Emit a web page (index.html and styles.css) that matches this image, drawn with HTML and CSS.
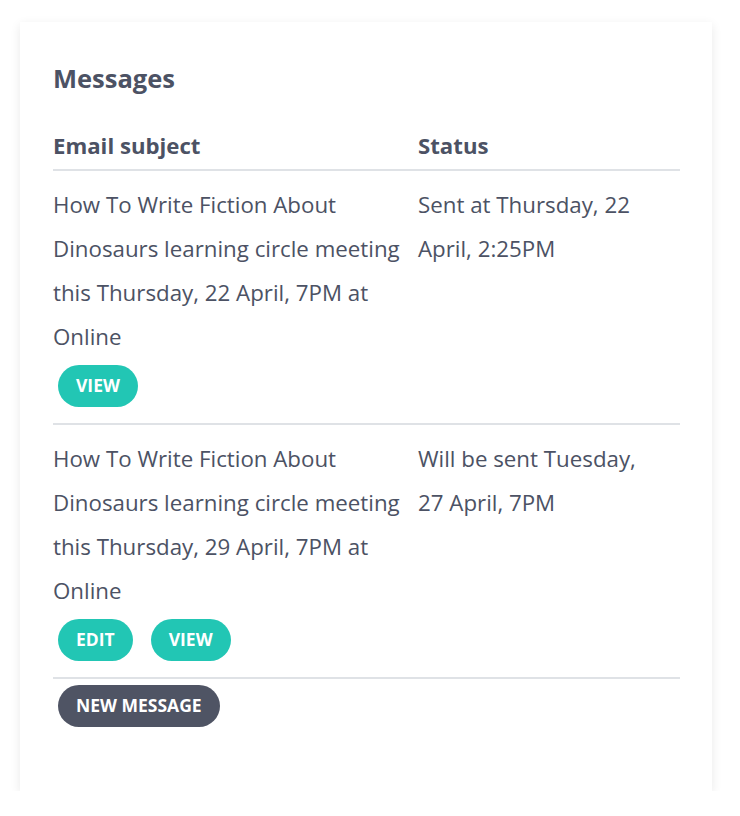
FILE: index.html
```html
<!DOCTYPE html>
<html>
<head>
<meta charset="utf-8">
<link rel="stylesheet" href="styles.css">
</head>
<body>
<div class="card">
  <h2 class="title">Messages</h2>
  <table class="messages">
    <thead>
      <tr>
        <th class="col-subject">Email subject</th>
        <th class="col-status">Status</th>
      </tr>
    </thead>
    <tbody>
      <tr>
        <td class="col-subject">
          <div class="subject">How To Write Fiction About Dinosaurs learning circle meeting this Thursday, 22 April, 7PM at Online</div>
          <div class="actions"><a class="btn btn-teal">VIEW</a></div>
        </td>
        <td class="col-status">Sent at Thursday, 22 April, 2:25PM</td>
      </tr>
      <tr>
        <td class="col-subject">
          <div class="subject">How To Write Fiction About Dinosaurs learning circle meeting this Thursday, 29 April, 7PM at Online</div>
          <div class="actions"><a class="btn btn-teal">EDIT</a><a class="btn btn-teal">VIEW</a></div>
        </td>
        <td class="col-status">Will be sent Tuesday, 27 April, 7PM</td>
      </tr>
    </tbody>
  </table>
  <div class="footer-actions"><a class="btn btn-dark">NEW MESSAGE</a></div>
</div>
</body>
</html>
```
FILE: styles.css
```css
* { box-sizing: border-box; }
html, body { margin: 0; padding: 0; background: #fff; }
body {
  font-family: "Open Sans", "Liberation Sans", sans-serif;
  color: #4c5264;
}
.card {
  width: 692px;
  margin: 22px 0 0 20px;
  padding: 40px 33px 64px 33px;
  background: #fff;
  box-shadow: 0 3px 10px rgba(0, 0, 0, 0.09);
}
.title {
  margin: 0 0 37px 0;
  font-size: 25.5px;
  line-height: 32px;
  font-weight: 700;
  color: #4c5264;
}
.messages {
  width: 627px;
  border-collapse: collapse;
  table-layout: fixed;
}
.messages th {
  text-align: left;
  font-size: 22.2px;
  font-weight: 700;
  line-height: 30px;
  padding: 0 0 8px 0;
  border-bottom: 2px solid #dfe2e6;
}
.messages .col-subject { width: 365px; padding-right: 12px; }
.messages td {
  vertical-align: top;
  font-size: 22.3px;
  line-height: 44px;
  padding: 12px 0 16px 0;
  border-bottom: 2px solid #dfe2e6;
}
.messages td.col-subject { padding-right: 12px; }
.messages td.col-status { padding-right: 15px; }
.actions {
  display: flex;
  gap: 18px;
  margin: 6px 0 0 5px;
}
.btn {
  display: inline-flex;
  align-items: center;
  height: 42px;
  padding: 0 18px;
  border-radius: 21px;
  font-size: 17.5px;
  font-weight: 700;
  line-height: 1;
  color: #fff;
}
.btn-teal { background: #22c6b4; }
.btn-dark { background: #4f5464; }
.footer-actions {
  margin: 6px 0 0 5px;
  display: flex;
}
```
